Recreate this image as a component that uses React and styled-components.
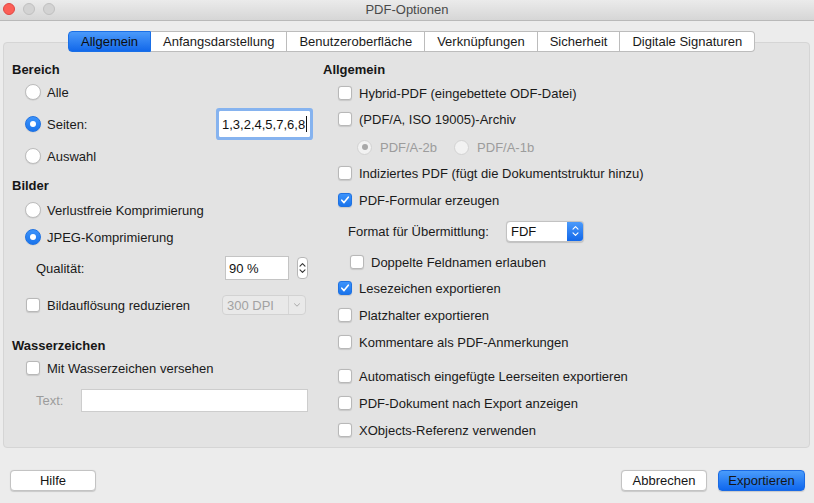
import React from "react";
import styled, { createGlobalStyle, css } from "styled-components";

const GlobalStyle = createGlobalStyle`
  html, body {
    margin: 0;
    padding: 0;
    background: #ececec;
  }
  body {
    font-family: "Liberation Sans", Arial, Helvetica, sans-serif;
    font-size: 13px;
    color: #1a1a1a;
  }
  * {
    box-sizing: border-box;
  }
`;

const Window = styled.div`
  width: 814px;
  height: 503px;
  display: flex;
  flex-direction: column;
  background: #ececec;
  overflow: hidden;
`;

const TitleBar = styled.div`
  height: 21px;
  display: grid;
  grid-template-columns: 1fr auto 1fr;
  align-items: center;
  padding: 0 3px;
  background: linear-gradient(#ebebeb, #d6d6d6);
  border-bottom: 1px solid #b9b9b9;
`;

const Lights = styled.div`
  display: flex;
  gap: 8px;
  margin-top: -2px;
`;

const Light = styled.span`
  width: 12px;
  height: 12px;
  border-radius: 50%;
  background: ${(p) => (p.$close ? "#fc5f57" : "#d3d3d3")};
  border: 1px solid ${(p) => (p.$close ? "#df4744" : "#c0c0c0")};
`;

const Title = styled.div`
  color: #4a4a4a;
  font-size: 13px;
  margin-top: -1px;
`;

const Body = styled.div`
  padding: 10px 4px 0 3px;
  display: flex;
  flex-direction: column;
`;

const TabRow = styled.div`
  display: flex;
  margin-left: 65px;
  margin-bottom: -10px;
  position: relative;
  z-index: 1;
`;

const Tab = styled.div`
  height: 21px;
  padding: 0 12px;
  display: flex;
  align-items: center;
  background: #fff;
  border: 1px solid #bcbcbc;
  border-left: none;
  white-space: nowrap;
  color: #1a1a1a;
  &:first-child {
    border-left: 1px solid #bcbcbc;
    border-radius: 4px 0 0 4px;
  }
  &:last-child {
    border-radius: 0 4px 4px 0;
  }
  ${(p) =>
    p.$active &&
    css`
      background: linear-gradient(#4b9afa, #1268ea);
      border-color: #1a6fe6 !important;
      color: #0d0d0d;
    `}
`;

const Panel = styled.div`
  height: 406px;
  background: #e3e3e3;
  border: 1px solid #d5d5d5;
  border-radius: 4px;
  padding: 15px 0 0 8px;
  display: flex;
  gap: 12px;
`;

const Column = styled.div`
  width: ${(p) => (p.$w ? `${p.$w}px` : "auto")};
  flex: ${(p) => (p.$w ? "none" : "1")};
  display: flex;
  flex-direction: column;
`;

/* every row is 20px tall; $mt is the space above it */
const Row = styled.div`
  height: 20px;
  margin-top: ${(p) => p.$mt || 0}px;
  display: flex;
  align-items: center;
  padding-left: ${(p) => p.$indent || 0}px;
  padding-right: ${(p) => p.$pr || 0}px;
  color: ${(p) => (p.$disabled ? "#9c9c9c" : "inherit")};
  white-space: nowrap;
`;

const Heading = styled(Row)`
  font-weight: bold;
  color: #161616;
`;

const RadioDot = styled.span`
  width: ${(p) => p.$size || 16}px;
  height: ${(p) => p.$size || 16}px;
  border-radius: 50%;
  flex: none;
  margin-right: ${(p) => p.$gap || 6}px;
  display: flex;
  align-items: center;
  justify-content: center;
  background: #fff;
  border: 1px solid #bdbdbd;
  box-shadow: 0 0.5px 1px rgba(0, 0, 0, 0.12);
  ${(p) =>
    p.$checked &&
    css`
      background: linear-gradient(#3c93fb, #1a74ec);
      border-color: #1f72e2;
      &::after {
        content: "";
        width: 6px;
        height: 6px;
        border-radius: 50%;
        background: #fff;
      }
    `}
  ${(p) =>
    p.$disabled &&
    css`
      background: #f2f2f2;
      border-color: #d2d2d2;
      box-shadow: none;
      &::after {
        background: ${p.$checked ? "#a8a8a8" : "transparent"};
      }
    `}
`;

const Box = styled.span`
  width: 14px;
  height: 14px;
  border-radius: 3px;
  flex: none;
  margin-right: 7px;
  display: flex;
  align-items: center;
  justify-content: center;
  background: ${(p) => (p.$checked ? "linear-gradient(#3c93fb, #1a74ec)" : "#fff")};
  border: 1px solid ${(p) => (p.$checked ? "#1f72e2" : "#b8b8b8")};
  box-shadow: 0 0.5px 1px rgba(0, 0, 0, 0.12);
`;

const Check = ({ checked }) => (
  <Box $checked={checked}>
    {checked && (
      <svg width="10" height="10" viewBox="0 0 10 10">
        <path d="M1.8 5.2 L4 7.6 L8.3 2.2" fill="none" stroke="#fff" strokeWidth="1.6" strokeLinecap="round" strokeLinejoin="round" />
      </svg>
    )}
  </Box>
);

const FieldLabel = styled.span`
  width: ${(p) => p.$w}px;
  flex: none;
  color: ${(p) => (p.$disabled ? "#9c9c9c" : "inherit")};
`;

const PageField = styled.div`
  margin-left: auto;
  width: 91px;
  height: 26px;
  flex: none;
  padding: 0 2px;
  display: flex;
  align-items: center;
  background: #fff;
  border: 1px solid #fff;
  box-shadow: 0 0 0 3px #86b3ef;
  border-radius: 1px;
  color: #111;
`;

const Caret = styled.span`
  width: 1px;
  height: 16px;
  background: #111;
  margin-left: 1px;
`;

const NumField = styled.div`
  width: 64px;
  height: 24px;
  flex: none;
  padding: 0 3px;
  display: flex;
  align-items: center;
  background: #fff;
  border: 1px solid #c4c4c4;
  color: #111;
`;

const SpinBox = styled.div`
  width: 11px;
  height: 22px;
  flex: none;
  margin-left: 8px;
  border: 1px solid #b7b7b7;
  border-radius: 4px;
  background: #fff;
  display: flex;
  align-items: center;
  justify-content: center;
`;

const DpiSelect = styled.div`
  margin-left: auto;
  width: 84px;
  height: 20px;
  display: flex;
  border: 1px solid #d2d2d2;
  border-radius: 4px;
  background: #e9e9e9;
  color: #a2a2a2;
  overflow: hidden;
`;

const SelectText = styled.span`
  flex: 1;
  display: flex;
  align-items: center;
  padding-left: 4px;
  border-right: 1px solid #d6d6d6;
`;

const SelectArrow = styled.span`
  width: 16px;
  display: flex;
  align-items: center;
  justify-content: center;
  background: ${(p) => (p.$blue ? "linear-gradient(#4b9afa, #1268ea)" : "transparent")};
`;

const FormatSelect = styled.div`
  width: 78px;
  height: 21px;
  flex: none;
  display: flex;
  border: 1px solid #c2c2c2;
  border-radius: 4px;
  background: #fff;
  color: #111;
  overflow: hidden;
  box-shadow: 0 0.5px 1px rgba(0, 0, 0, 0.15);
  ${SelectText} {
    border-right: none;
    padding-left: 4px;
  }
`;

const TextField = styled.div`
  width: 227px;
  height: 23px;
  flex: none;
  background: #fff;
  border: 1px solid #cdcdcd;
`;

const Gap = styled.span`
  width: ${(p) => p.$w}px;
  flex: none;
`;

const Footer = styled.div`
  display: flex;
  align-items: center;
  margin-top: 22px;
  padding: 0 5px 0 7px;
  gap: 11px;
`;

const Button = styled.button`
  height: 21px;
  width: ${(p) => p.$w}px;
  font: inherit;
  font-size: 13px;
  color: #151515;
  border-radius: 4px;
  border: 1px solid #c3c3c3;
  background: #fff;
  box-shadow: 0 0.5px 1px rgba(0, 0, 0, 0.15);
  padding: 0;
  ${(p) =>
    p.$primary &&
    css`
      background: linear-gradient(#4a9cfb, #0f67ee);
      border-color: #1a6ae4;
    `}
  &:first-child {
    margin-right: auto;
  }
`;

const Chevrons = ({ color }) => (
  <svg width="7" height="12" viewBox="0 0 7 12">
    <path d="M1 4.2 L3.5 1.7 L6 4.2 M1 7.8 L3.5 10.3 L6 7.8" fill="none" stroke={color} strokeWidth="1.1" strokeLinecap="round" strokeLinejoin="round" />
  </svg>
);

const DownChevron = () => (
  <svg width="8" height="6" viewBox="0 0 8 6">
    <path d="M1.5 1.8 L4 4.2 L6.5 1.8" fill="none" stroke="#a8a8a8" strokeWidth="1" strokeLinecap="round" />
  </svg>
);

const tabs = [
  "Allgemein",
  "Anfangsdarstellung",
  "Benutzeroberfläche",
  "Verknüpfungen",
  "Sicherheit",
  "Digitale Signaturen",
];

const formOptions = [
  { mt: 6, label: "Indiziertes PDF (fügt die Dokumentstruktur hinzu)" },
  { mt: 7, label: "PDF-Formular erzeugen", checked: true },
];

const exportOptions = [
  { mt: 6, label: "Lesezeichen exportieren", checked: true },
  { mt: 7, label: "Platzhalter exportieren" },
  { mt: 7, label: "Kommentare als PDF-Anmerkungen" },
  { mt: 14, label: "Automatisch eingefügte Leerseiten exportieren" },
  { mt: 7, label: "PDF-Dokument nach Export anzeigen" },
  { mt: 7, label: "XObjects-Referenz verwenden" },
];

export default function App() {
  return (
    <Window>
      <GlobalStyle />
      <TitleBar>
        <Lights>
          <Light $close />
          <Light />
          <Light />
        </Lights>
        <Title>PDF-Optionen</Title>
        <span />
      </TitleBar>

      <Body>
        <TabRow>
          {tabs.map((t, i) => (
            <Tab key={t} $active={i === 0}>
              {t}
            </Tab>
          ))}
        </TabRow>

        <Panel>
          <Column $w={299}>
            <Heading $mt={1}>Bereich</Heading>
            <Row $mt={3} $indent={13}>
              <RadioDot />
              Alle
            </Row>
            <Row $mt={12} $indent={13} $pr={1}>
              <RadioDot $checked />
              Seiten:
              <PageField>
                1,3,2,4,5,7,6,8
                <Caret />
              </PageField>
            </Row>
            <Row $mt={12} $indent={13}>
              <RadioDot />
              Auswahl
            </Row>

            <Heading $mt={9}>Bilder</Heading>
            <Row $mt={5} $indent={13}>
              <RadioDot />
              Verlustfreie Komprimierung
            </Row>
            <Row $mt={7} $indent={13}>
              <RadioDot $checked />
              JPEG-Komprimierung
            </Row>
            <Row $mt={11} $indent={24}>
              <FieldLabel $w={189}>Qualität:</FieldLabel>
              <NumField>90 %</NumField>
              <SpinBox>
                <Chevrons color="#333" />
              </SpinBox>
            </Row>
            <Row $mt={17} $indent={14} $pr={5}>
              <Check />
              Bildauflösung reduzieren
              <DpiSelect>
                <SelectText>300 DPI</SelectText>
                <SelectArrow>
                  <DownChevron />
                </SelectArrow>
              </DpiSelect>
            </Row>

            <Heading $mt={20}>Wasserzeichen</Heading>
            <Row $mt={3} $indent={14}>
              <Check />
              Mit Wasserzeichen versehen
            </Row>
            <Row $mt={12} $indent={24}>
              <FieldLabel $w={45} $disabled>
                Text:
              </FieldLabel>
              <TextField />
            </Row>
          </Column>

          <Column>
            <Heading $mt={1}>Allgemein</Heading>
            <Row $mt={4} $indent={15}>
              <Check />
              Hybrid-PDF (eingebettete ODF-Datei)
            </Row>
            <Row $mt={6} $indent={15}>
              <Check />
              (PDF/A, ISO 19005)-Archiv
            </Row>
            <Row $mt={8} $indent={34} $disabled>
              <RadioDot $size={15} $gap={8} $checked $disabled />
              PDF/A-2b
              <Gap $w={17} />
              <RadioDot $size={15} $gap={8} $disabled />
              PDF/A-1b
            </Row>
            {formOptions.map((o) => (
              <Row key={o.label} $mt={o.mt} $indent={15}>
                <Check checked={o.checked} />
                {o.label}
              </Row>
            ))}
            <Row $mt={11} $indent={25}>
              <FieldLabel $w={158}>Format für Übermittlung:</FieldLabel>
              <FormatSelect>
                <SelectText>FDF</SelectText>
                <SelectArrow $blue>
                  <Chevrons color="#fff" />
                </SelectArrow>
              </FormatSelect>
            </Row>
            <Row $mt={11} $indent={27}>
              <Check />
              Doppelte Feldnamen erlauben
            </Row>
            {exportOptions.map((o) => (
              <Row key={o.label} $mt={o.mt} $indent={15}>
                <Check checked={o.checked} />
                {o.label}
              </Row>
            ))}
          </Column>
        </Panel>

        <Footer>
          <Button $w={86}>Hilfe</Button>
          <Button $w={86}>Abbrechen</Button>
          <Button $w={87} $primary>
            Exportieren
          </Button>
        </Footer>
      </Body>
    </Window>
  );
}
